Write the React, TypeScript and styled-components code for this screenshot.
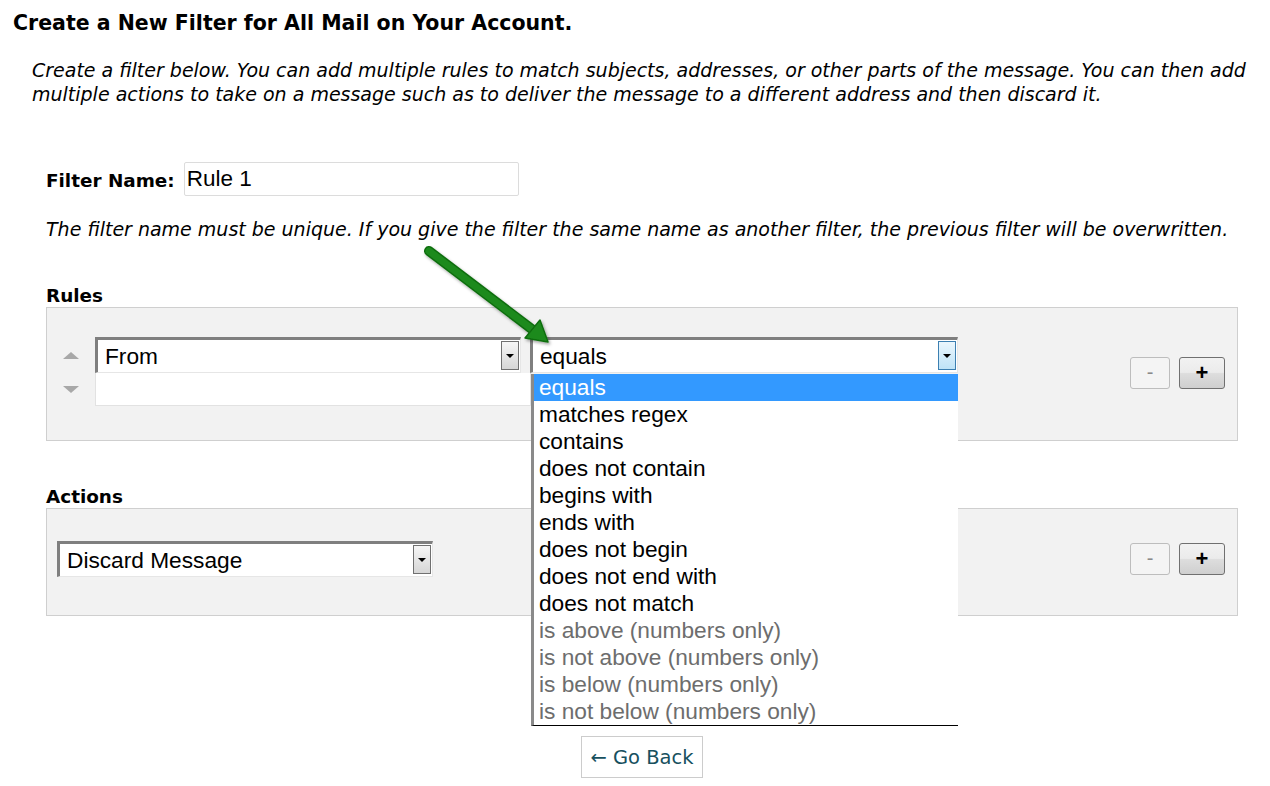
import React from "react";
import styled, { createGlobalStyle } from "styled-components";

const Global = createGlobalStyle`
  html, body { margin: 0; padding: 0; background: #ffffff; }
  body { font-family: "DejaVu Sans", Verdana, sans-serif; color: #000; }
`;

const Page = styled.div`
  position: relative;
  width: 1270px;
  height: 786px;
  padding: 11px 13px 0 13px;
  box-sizing: border-box;
  overflow: hidden;
`;

const Title = styled.h2`
  margin: 0;
  font-size: 20.5px;
  line-height: 24px;
  font-weight: bold;
  font-family: "DejaVu Sans", Verdana, sans-serif;
  white-space: nowrap;
`;

const Intro = styled.p`
  margin: 23px 0 0 19px;
  font-size: 19px;
  line-height: 24px;
  font-style: italic;
  width: 1225px;
`;

const Form = styled.div`
  margin-left: 33px;
  width: 1192px;
  display: flex;
  flex-direction: column;
`;

const NameRow = styled.div`
  margin-top: 56px;
  display: flex;
  align-items: center;
  gap: 9px;
`;

const Label = styled.span`
  font-weight: bold;
  font-size: 18.4px;
  line-height: 22px;
`;

const NameLabel = styled(Label)`
  padding-top: 4px;
`;

const TextInput = styled.div<{ $w: number }>`
  width: ${(p) => p.$w}px;
  height: 34px;
  box-sizing: border-box;
  border: 1px solid #dcdcdc;
  border-radius: 2px;
  background: #fff;
  font-family: "Liberation Sans", Arial, sans-serif;
  font-size: 22.5px;
  line-height: 32px;
  padding-left: 2px;
`;

const Note = styled.p`
  margin: 21px 0 0 0;
  font-size: 19px;
  line-height: 24px;
  font-style: italic;
  white-space: nowrap;
`;

const SectionLabel = styled(Label)<{ $mt: number }>`
  display: block;
  margin-top: ${(p) => p.$mt}px;
`;

const Box = styled.div<{ $pt: number; $pb: number; $pl: number }>`
  border: 1px solid #cfcfcf;
  background: #f2f2f2;
  padding: ${(p) => p.$pt}px 12px ${(p) => p.$pb}px ${(p) => p.$pl}px;
  display: flex;
  align-items: center;
`;

const Arrows = styled.div`
  width: 48px;
  height: 69px;
  display: flex;
  flex-direction: column;
  justify-content: space-between;
  align-items: center;
  padding: 15px 0 13px 0;
  box-sizing: border-box;
`;

const Tri = styled.div<{ $down?: boolean }>`
  width: 0;
  height: 0;
  border-left: 8px solid transparent;
  border-right: 8px solid transparent;
  ${(p) =>
    p.$down
      ? "border-top: 7px solid #a8a8a8;"
      : "border-bottom: 7px solid #a8a8a8;"}
`;

const RuleGrid = styled.div`
  display: flex;
  align-items: flex-start;
  gap: 9px;
`;

const Stack = styled.div`
  width: 426px;
  display: flex;
  flex-direction: column;
`;

const Select = styled.div<{ $w: number }>`
  position: relative;
  width: ${(p) => p.$w}px;
  height: 36px;
  box-sizing: border-box;
  border-top: 3px solid #7f7f7f;
  border-left: 3px solid #7f7f7f;
  border-right: 1px solid #e6e6e6;
  border-bottom: 1px solid #e6e6e6;
  background: #fff;
  font-family: "Liberation Sans", Arial, sans-serif;
  font-size: 22.7px;
  line-height: 32px;
  padding-left: 7px;
`;

const DropBtn = styled.div<{ $focus?: boolean }>`
  position: absolute;
  right: 1px;
  top: 1px;
  width: 18px;
  height: 29px;
  box-sizing: border-box;
  border: 1px solid ${(p) => (p.$focus ? "#3c7fb1" : "#707070")};
  background: ${(p) =>
    p.$focus
      ? "linear-gradient(#eaf6fd, #bfe3f7)"
      : "linear-gradient(#f6f6f6, #d6d6d6)"};
  display: flex;
  align-items: center;
  justify-content: center;
  &::after {
    content: "";
    width: 0;
    height: 0;
    border-left: 4px solid transparent;
    border-right: 4px solid transparent;
    border-top: 4px solid #000;
  }
`;

const SubInput = styled.div`
  width: 436px;
  margin-right: -10px;
  height: 33px;
  box-sizing: border-box;
  border: 1px solid #e2e2e2;
  border-top: none;
  background: #fff;
`;

const List = styled.ul`
  position: absolute;
  left: -2px;
  top: 34px;
  width: 427px;
  margin: 0;
  padding: 0;
  list-style: none;
  background: #fff;
  border-left: 3px solid #8a8a8a;
  border-bottom: 1px solid #000;
  box-sizing: border-box;
  z-index: 5;
`;

const Item = styled.li<{ $sel?: boolean; $dis?: boolean }>`
  height: 27px;
  line-height: 27px;
  padding-left: 5px;
  font-family: "Liberation Sans", Arial, sans-serif;
  font-size: 22.7px;
  background: ${(p) => (p.$sel ? "#3399ff" : "transparent")};
  color: ${(p) => (p.$sel ? "#fff" : p.$dis ? "#6d6d6d" : "#000")};
  white-space: nowrap;
`;

const Buttons = styled.div<{ $mt: number }>`
  margin-left: auto;
  margin-top: ${(p) => p.$mt}px;
  display: flex;
  gap: 9px;
  align-self: center;
`;

const SmallBtn = styled.div<{ $primary?: boolean }>`
  width: ${(p) => (p.$primary ? 46 : 40)}px;
  height: 32px;
  box-sizing: border-box;
  border-radius: 3px;
  border: 1px solid ${(p) => (p.$primary ? "#707070" : "#bdbdbd")};
  background: ${(p) =>
    p.$primary
      ? "linear-gradient(#f2f2f2 0%, #ebebeb 48%, #dddddd 52%, #cfcfcf 100%)"
      : "#f4f4f4"};
  color: ${(p) => (p.$primary ? "#000" : "#8a8a8a")};
  font-family: "Liberation Sans", Arial, sans-serif;
  font-size: ${(p) => (p.$primary ? 22 : 20)}px;
  font-weight: ${(p) => (p.$primary ? "bold" : "normal")};
  display: flex;
  align-items: center;
  justify-content: center;
`;

const BackWrap = styled.div`
  margin-top: 120px;
  display: flex;
  justify-content: center;
`;

const BackBtn = styled.div`
  width: 122px;
  height: 42px;
  box-sizing: border-box;
  border: 1px solid #cccccc;
  background: #fff;
  color: #17505e;
  font-size: 19.5px;
  display: flex;
  align-items: center;
  justify-content: center;
`;

const Overlay = styled.svg`
  position: absolute;
  left: 0;
  top: 0;
  pointer-events: none;
  z-index: 10;
`;

const options = [
  "equals",
  "matches regex",
  "contains",
  "does not contain",
  "begins with",
  "ends with",
  "does not begin",
  "does not end with",
  "does not match",
];
const disabled = [
  "is above (numbers only)",
  "is not above (numbers only)",
  "is below (numbers only)",
  "is not below (numbers only)",
];

function AddRemove({ mt }: { mt: number }) {
  return (
    <Buttons $mt={mt}>
      <SmallBtn>-</SmallBtn>
      <SmallBtn $primary>+</SmallBtn>
    </Buttons>
  );
}

export default function App() {
  return (
    <Page>
      <Global />
      <Title>Create a New Filter for All Mail on Your Account.</Title>
      <Intro>
        Create a filter below. You can add multiple rules to match subjects,
        addresses, or other parts of the message. You can then add multiple
        actions to take on a message such as to deliver the message to a
        different address and then discard it.
      </Intro>
      <Form>
        <NameRow>
          <NameLabel>Filter Name:</NameLabel>
          <TextInput $w={335}>Rule 1</TextInput>
        </NameRow>
        <Note>
          The filter name must be unique. If you give the filter the same name
          as another filter, the previous filter will be overwritten.
        </Note>
        <SectionLabel $mt={44}>Rules</SectionLabel>
        <Box $pt={29} $pb={34} $pl={0}>
          <Arrows>
            <Tri />
            <Tri $down />
          </Arrows>
          <RuleGrid>
            <Stack>
              <Select $w={426}>
                From
                <DropBtn />
              </Select>
              <SubInput />
            </Stack>
            <Select $w={428}>
              equals
              <DropBtn $focus />
              <List>
                {options.map((o, i) => (
                  <Item key={o} $sel={i === 0}>
                    {o}
                  </Item>
                ))}
                {disabled.map((o) => (
                  <Item key={o} $dis>
                    {o}
                  </Item>
                ))}
              </List>
            </Select>
          </RuleGrid>
          <AddRemove mt={2} />
        </Box>
        <SectionLabel $mt={45}>Actions</SectionLabel>
        <Box $pt={32} $pb={38} $pl={10}>
          <Select $w={376}>
            Discard Message
            <DropBtn />
          </Select>
          <AddRemove mt={-1} />
        </Box>
        <BackWrap>
          <BackBtn>← Go Back</BackBtn>
        </BackWrap>
      </Form>
      <Overlay width="1270" height="786" viewBox="0 0 1270 786">
        <defs>
          <filter id="sh" x="-20%" y="-20%" width="140%" height="140%">
            <feDropShadow dx="1.5" dy="2" stdDeviation="1.5" floodColor="#000" floodOpacity="0.35" />
          </filter>
        </defs>
        <g filter="url(#sh)">
          <line x1="429" y1="251" x2="533" y2="330" stroke="#0f6e0f" strokeWidth="10" strokeLinecap="round" />
          <line x1="429" y1="251" x2="533" y2="330" stroke="#1f8a1f" strokeWidth="7" strokeLinecap="round" />
          <polygon points="548,342 525,338 540,320" fill="#1f8a1f" stroke="#0f6e0f" strokeWidth="1.5" strokeLinejoin="round" />
        </g>
      </Overlay>
    </Page>
  );
}
